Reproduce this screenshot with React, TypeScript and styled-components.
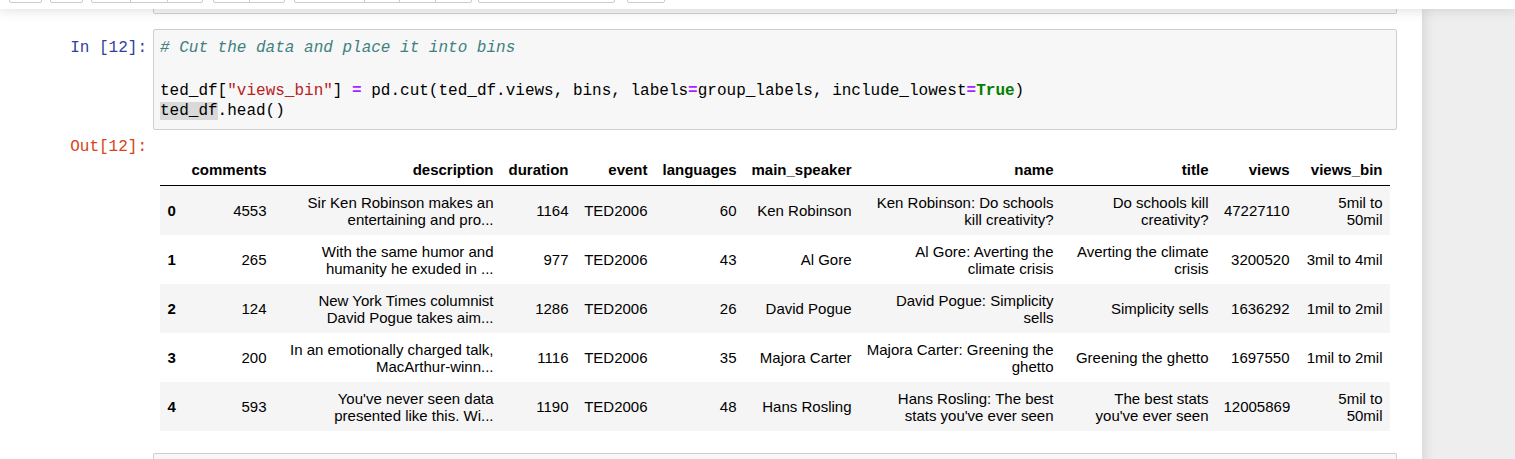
import styled, { createGlobalStyle } from "styled-components";

const GlobalStyle = createGlobalStyle`
  html, body {
    margin: 0;
    padding: 0;
    background: #eeeeee;
  }
  body {
    font-family: "Liberation Sans", Arial, sans-serif;
    overflow: hidden;
  }
`;

const MONO = `"Liberation Mono", "DejaVu Sans Mono", monospace`;

const Page = styled.div`
  width: 1515px;
  height: 459px;
  overflow: hidden;
  background: #eeeeee;
  display: flex;
  flex-direction: column;
`;

const Header = styled.div`
  position: relative;
  z-index: 2;
  height: 9px;
  box-sizing: border-box;
  padding: 0 0 6px 9px;
  background: #ffffff;
  display: flex;
  align-items: flex-end;
  box-shadow: 0 0 12px 1px rgba(87, 87, 87, 0.2);
`;

const BtnGroup = styled.div<{ $gap: number }>`
  display: flex;
  margin-left: ${(p) => p.$gap}px;
`;

const Btn = styled.div<{ $w: number }>`
  width: ${(p) => p.$w}px;
  height: 30px;
  box-sizing: border-box;
  background: #ffffff;
  border: 1px solid #cccccc;
  & + & {
    margin-left: -1px;
  }
  &:first-child {
    border-bottom-left-radius: 2px;
  }
  &:last-child {
    border-bottom-right-radius: 2px;
  }
`;

const Main = styled.div`
  flex: 1;
  display: flex;
`;

const NotebookContainer = styled.div`
  position: relative;
  z-index: 1;
  width: 1422px;
  flex: none;
  box-sizing: border-box;
  padding-right: 25px;
  background: #ffffff;
  box-shadow: 0 0 12px 1px rgba(87, 87, 87, 0.2);
  display: flex;
  flex-direction: column;
`;

const PrevCell = styled.div`
  margin-left: 153px;
  height: 4px;
  background: #f7f7f7;
  border: 1px solid #cfcfcf;
  border-top: none;
  border-radius: 0 0 2px 2px;
`;

const CellRow = styled.div<{ $top: number }>`
  display: flex;
  align-items: flex-start;
  margin-top: ${(p) => p.$top}px;
`;

const Prompt = styled.div<{ $color: string; $pad: number }>`
  width: 153px;
  flex: none;
  box-sizing: border-box;
  padding: ${(p) => p.$pad}px 6px 0 0;
  text-align: right;
  font-family: ${MONO};
  font-size: 16px;
  line-height: 21px;
  color: ${(p) => p.$color};
  white-space: pre;
`;

const InputBox = styled.div`
  flex: 1;
  box-sizing: border-box;
  height: 101px;
  padding: 8px 6px 7px;
  background: #f7f7f7;
  border: 1px solid #cfcfcf;
  border-radius: 2px;
  font-family: ${MONO};
  font-size: 16px;
  line-height: 21px;
  color: #000000;
  white-space: pre;
`;

const CodeLine = styled.div<{ $h?: number }>`
  height: ${(p) => p.$h ?? 21}px;
`;

const Tok = styled.span<{ $kind?: "comment" | "string" | "op" | "kw" | "match" }>`
  ${(p) => p.$kind === "comment" && "color: #408080; font-style: italic;"}
  ${(p) => p.$kind === "string" && "color: #ba2121;"}
  ${(p) => p.$kind === "op" && "color: #aa22ff; font-weight: bold;"}
  ${(p) => p.$kind === "kw" && "color: #008000; font-weight: bold;"}
  ${(p) => p.$kind === "match" && "background: #d9d9d9;"}
`;

const OutputArea = styled.div`
  flex: 1;
  padding: 23px 0 0 7px;
`;

const Frame = styled.table`
  table-layout: fixed;
  width: 1230px;
  border-collapse: collapse;
  border: none;
  font-family: "Liberation Sans", Arial, sans-serif;
  font-size: 15px;
  line-height: 17px;
  color: #000000;
`;

const Col = styled.col<{ $w: number }>`
  width: ${(p) => p.$w}px;
`;

const HeadRow = styled.tr`
  border-bottom: 1px solid #000000;
`;

const HeadCell = styled.th`
  padding: 7.5px;
  text-align: right;
  vertical-align: bottom;
  font-weight: bold;
  white-space: pre;
`;

const BodyRow = styled.tr`
  &:nth-child(odd) {
    background: #f5f5f5;
  }
`;

const IndexCell = styled.th`
  padding: 7.5px;
  text-align: left;
  vertical-align: middle;
  font-weight: bold;
`;

const DataCell = styled.td`
  padding: 7.5px;
  text-align: right;
  vertical-align: middle;
  white-space: pre;
`;

const NextCell = styled.div`
  margin: 22px 0 0 153px;
  height: 20px;
  background: #f7f7f7;
  border: 1px solid #cfcfcf;
  border-bottom: none;
  border-radius: 2px 2px 0 0;
`;

const Gray = styled.div`
  flex: 1;
  background: #eeeeee;
`;

const toolbar: { gap: number; widths: number[] }[] = [
  { gap: 0, widths: [33] },
  { gap: 8, widths: [33] },
  { gap: 8, widths: [40, 38, 36] },
  { gap: 10, widths: [37, 36] },
  { gap: 9, widths: [71, 36, 37, 37] },
  { gap: 6, widths: [137] },
  { gap: 12, widths: [38] },
];

const colWidths = [24, 90, 227, 75, 79, 89, 115, 202, 155, 81, 93];

const columns = [
  "",
  "comments",
  "description",
  "duration",
  "event",
  "languages",
  "main_speaker",
  "name",
  "title",
  "views",
  "views_bin",
];

const rows: string[][] = [
  [
    "0",
    "4553",
    "Sir Ken Robinson makes an\nentertaining and pro...",
    "1164",
    "TED2006",
    "60",
    "Ken Robinson",
    "Ken Robinson: Do schools\nkill creativity?",
    "Do schools kill\ncreativity?",
    "47227110",
    "5mil to\n50mil",
  ],
  [
    "1",
    "265",
    "With the same humor and\nhumanity he exuded in ...",
    "977",
    "TED2006",
    "43",
    "Al Gore",
    "Al Gore: Averting the\nclimate crisis",
    "Averting the climate\ncrisis",
    "3200520",
    "3mil to 4mil",
  ],
  [
    "2",
    "124",
    "New York Times columnist\nDavid Pogue takes aim...",
    "1286",
    "TED2006",
    "26",
    "David Pogue",
    "David Pogue: Simplicity\nsells",
    "Simplicity sells",
    "1636292",
    "1mil to 2mil",
  ],
  [
    "3",
    "200",
    "In an emotionally charged talk,\nMacArthur-winn...",
    "1116",
    "TED2006",
    "35",
    "Majora Carter",
    "Majora Carter: Greening the\nghetto",
    "Greening the ghetto",
    "1697550",
    "1mil to 2mil",
  ],
  [
    "4",
    "593",
    "You've never seen data\npresented like this. Wi...",
    "1190",
    "TED2006",
    "48",
    "Hans Rosling",
    "Hans Rosling: The best\nstats you've ever seen",
    "The best stats\nyou've ever seen",
    "12005869",
    "5mil to\n50mil",
  ],
];

export default function App() {
  return (
    <Page>
      <GlobalStyle />
      <Header>
        {toolbar.map((g, i) => (
          <BtnGroup key={i} $gap={g.gap}>
            {g.widths.map((w, j) => (
              <Btn key={j} $w={w} />
            ))}
          </BtnGroup>
        ))}
      </Header>
      <Main>
        <NotebookContainer>
          <PrevCell />
          <CellRow $top={15}>
            <Prompt $color="#303f9f" $pad={9}>
              In [12]:
            </Prompt>
            <InputBox>
              <CodeLine>
                <Tok $kind="comment"># Cut the data and place it into bins</Tok>
              </CodeLine>
              <CodeLine $h={22}> </CodeLine>
              <CodeLine $h={20}>
                ted_df[<Tok $kind="string">"views_bin"</Tok>] <Tok $kind="op">=</Tok> pd.cut(ted_df.views, bins, labels
                <Tok $kind="op">=</Tok>group_labels, include_lowest<Tok $kind="op">=</Tok>
                <Tok $kind="kw">True</Tok>)
              </CodeLine>
              <CodeLine>
                <Tok $kind="match">ted_df</Tok>.head()
              </CodeLine>
            </InputBox>
          </CellRow>
          <CellRow $top={0}>
            <Prompt $color="#d84315" $pad={7}>
              Out[12]:
            </Prompt>
            <OutputArea>
              <Frame>
                <colgroup>
                  {colWidths.map((w, i) => (
                    <Col key={i} $w={w} />
                  ))}
                </colgroup>
                <thead>
                  <HeadRow>
                    {columns.map((c, i) => (
                      <HeadCell key={i}>{c}</HeadCell>
                    ))}
                  </HeadRow>
                </thead>
                <tbody>
                  {rows.map((r) => (
                    <BodyRow key={r[0]}>
                      <IndexCell>{r[0]}</IndexCell>
                      {r.slice(1).map((v, j) => (
                        <DataCell key={j}>{v}</DataCell>
                      ))}
                    </BodyRow>
                  ))}
                </tbody>
              </Frame>
            </OutputArea>
          </CellRow>
          <NextCell />
        </NotebookContainer>
        <Gray />
      </Main>
    </Page>
  );
}
